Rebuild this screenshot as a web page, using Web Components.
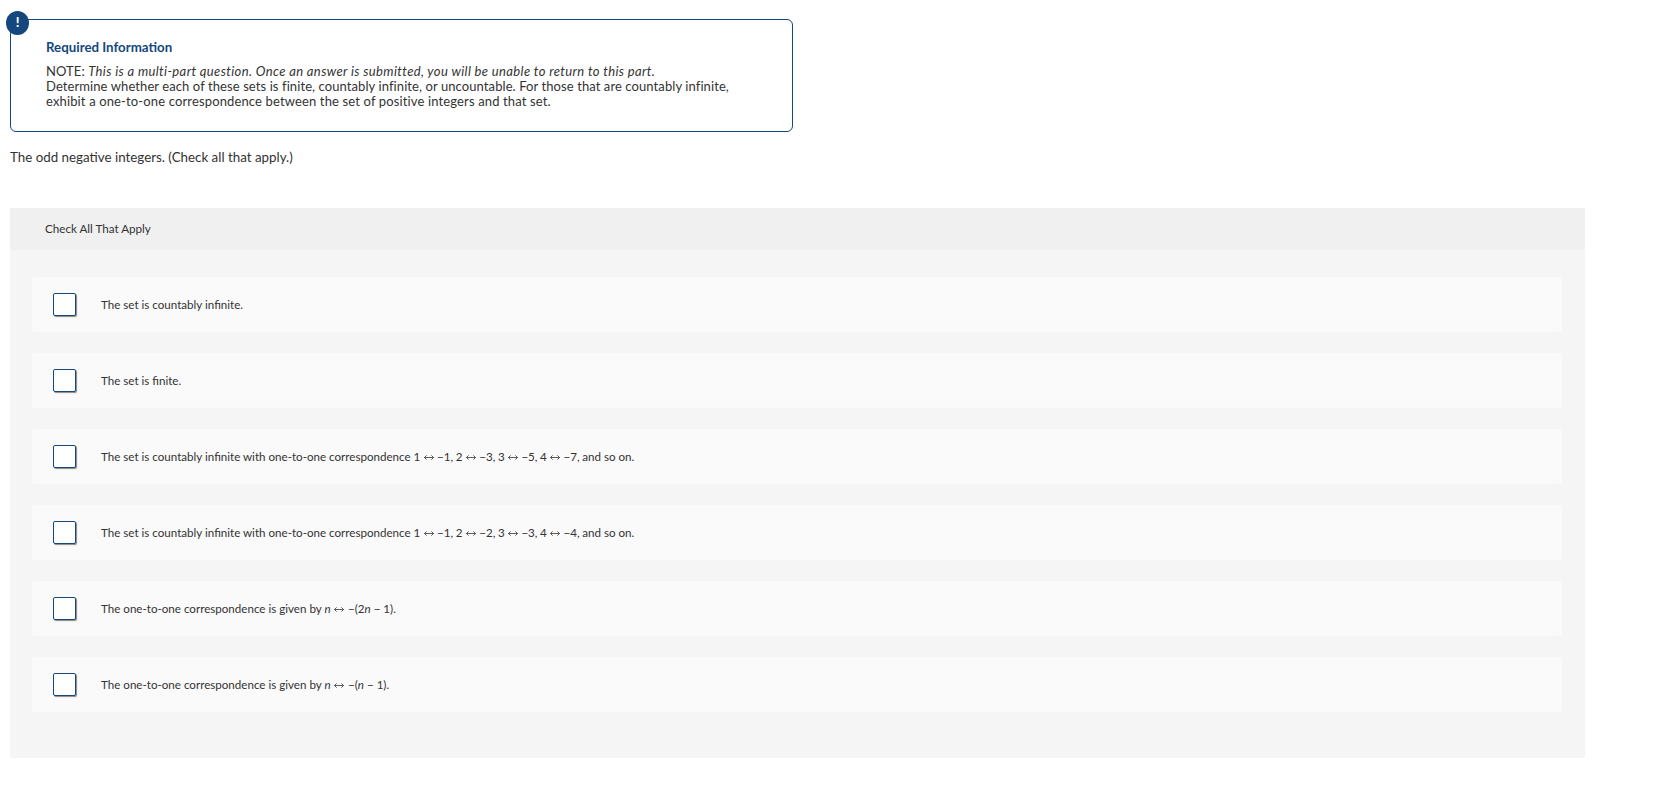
<!DOCTYPE html>
<html lang="en">
<head>
<meta charset="utf-8">
<title>Required Information</title>
<style>
    html, body { margin: 0; background: #fff; }
    body { font-family: Lato, "Liberation Sans", sans-serif; color: #333; }
</style>
</head>
<body>
<question-page>
    <required-info title-text="Required Information">
        NOTE: <i style="letter-spacing: 0.37px">This is a multi-part question. Once an answer is submitted, you will be unable to return to this part.</i><br>
        Determine whether each of these sets is finite, countably infinite, or uncountable. For those that are countably infinite,<br>
        <span style="letter-spacing: 0.14px">exhibit a one-to-one correspondence between the set of positive integers and that set.</span>
    </required-info>
    <question-prompt>The odd negative integers. (Check all that apply.)</question-prompt>
    <check-panel heading="Check All That Apply">
        <check-option>The set is countably infinite.</check-option>
        <check-option>The set is finite.</check-option>
        <check-option>The set is countably infinite with one-to-one correspondence <math-run>1 <math-arrow></math-arrow> −1, 2 <math-arrow></math-arrow> −3, 3 <math-arrow></math-arrow> −5, 4 <math-arrow></math-arrow> −7, </math-run>and so on.</check-option>
        <check-option>The set is countably infinite with one-to-one correspondence <math-run>1 <math-arrow></math-arrow> −1, 2 <math-arrow></math-arrow> −2, 3 <math-arrow></math-arrow> −3, 4 <math-arrow></math-arrow> −4, </math-run>and so on.</check-option>
        <check-option>The one-to-one correspondence is given by <i>n</i> <math-arrow></math-arrow> −(2<i>n</i> − 1).</check-option>
        <check-option>The one-to-one correspondence is given by <i>n</i> <math-arrow></math-arrow> −(<i>n</i> − 1).</check-option>
    </check-panel>
</question-page>
<script>
class QuestionPage extends HTMLElement {
    constructor() {
        super();
        this.attachShadow({ mode: 'open' });
        this.shadowRoot.innerHTML = `
            <style>
                :host {
                    display: flex;
                    flex-direction: column;
                    align-items: flex-start;
                    padding: 19px 72px 44px 10px;
                    height: 802px;
                    box-sizing: border-box;
                }
            </style>
            <slot></slot>
        `;
    }
}

class RequiredInfo extends HTMLElement {
    constructor() {
        super();
        this.attachShadow({ mode: 'open' });
    }

    connectedCallback() {
        this.shadowRoot.innerHTML = `
            <style>
                :host {
                    display: block;
                    position: relative;
                    box-sizing: border-box;
                    width: 783px;
                    height: 113px;
                    padding: 19px 35px 0 35px;
                    border: 1px solid #14477d;
                    border-radius: 6px;
                    background: #fff;
                }
                .badge {
                    position: absolute;
                    left: -5px;
                    top: -9px;
                    width: 23px;
                    height: 24px;
                    border-radius: 50%;
                    background: #14477d;
                    color: #fff;
                    font: 900 13px/22px Lato, sans-serif;
                    text-align: center;
                }
                .title {
                    font-size: 13.3px;
                    font-weight: 700;
                    line-height: 16px;
                    color: #14477d;
                    margin-bottom: 9px;
                }
                .body {
                    font-size: 13px;
                    letter-spacing: 0.09px;
                    line-height: 15px;
                    color: #333;
                }
            </style>
            <div class="badge">!</div>
            <div class="title">${this.getAttribute('title-text') || ''}</div>
            <div class="body"><slot></slot></div>
        `;
    }
}

class QuestionPrompt extends HTMLElement {
    constructor() {
        super();
        this.attachShadow({ mode: 'open' });
        this.shadowRoot.innerHTML = `
            <style>
                :host {
                    display: block;
                    margin-top: 16px;
                    font-size: 13.35px;
                    line-height: 18px;
                    color: #333;
                }
            </style>
            <slot></slot>
        `;
    }
}

class CheckPanel extends HTMLElement {
    constructor() {
        super();
        this.attachShadow({ mode: 'open' });
    }

    connectedCallback() {
        this.shadowRoot.innerHTML = `
            <style>
                :host {
                    display: block;
                    box-sizing: border-box;
                    width: 1575px;
                    height: 550px;
                    margin-top: 42px;
                    background: #f5f5f5;
                    border-radius: 2px;
                }
                .head {
                    box-sizing: border-box;
                    height: 42px;
                    padding: 0 35px 2px;
                    display: flex;
                    align-items: center;
                    background: #f0f0f0;
                    font-size: 11.65px;
                    color: #333;
                }
                .list {
                    display: flex;
                    flex-direction: column;
                    gap: 21px;
                    padding: 27px 23px 0 22px;
                }
            </style>
            <div class="head">${this.getAttribute('heading') || ''}</div>
            <div class="list"><slot></slot></div>
        `;
    }
}

class CheckOption extends HTMLElement {
    constructor() {
        super();
        this.attachShadow({ mode: 'open' });
        this.shadowRoot.innerHTML = `
            <style>
                :host {
                    display: flex;
                    align-items: center;
                    gap: 24px;
                    height: 55px;
                    padding-left: 21px;
                    background: #fafafa;
                    border-radius: 3px;
                    font-size: 11.6px;
                    color: #333;
                }
                .box {
                    flex: none;
                    box-sizing: border-box;
                    width: 23px;
                    height: 23px;
                    margin-right: 1px;
                    background: #fff;
                    border: 1px solid #14477d;
                    border-radius: 2px;
                    box-shadow: 1px 1px 1px #888;
                }
            </style>
            <span class="box"></span>
            <span class="label"><slot></slot></span>
        `;
    }
}

// spacing of the 1 <-> -1 runs, tighter than the words around them
class MathRun extends HTMLElement {
    constructor() {
        super();
        this.attachShadow({ mode: 'open' });
        this.shadowRoot.innerHTML = `
            <style>
                :host { display: inline; word-spacing: -0.35px; }
            </style>
            <slot></slot>
        `;
    }
}

class MathArrow extends HTMLElement {
    constructor() {
        super();
        this.attachShadow({ mode: 'open' });
        this.shadowRoot.innerHTML = `
            <style>
                :host { display: inline-block; width: 10px; height: 7px; margin: 0 0.75px; vertical-align: 0.5px; }
                svg { display: block; }
            </style>
            <svg width="10" height="7" viewBox="0 0 10 7" fill="none" stroke="#333" stroke-width="0.8">
                <path d="M0.5 3.5H9.5M2.6 1.4L0.5 3.5L2.6 5.6M7.4 1.4L9.5 3.5L7.4 5.6"/>
            </svg>
        `;
    }
}

customElements.define('question-page', QuestionPage);
customElements.define('required-info', RequiredInfo);
customElements.define('question-prompt', QuestionPrompt);
customElements.define('check-panel', CheckPanel);
customElements.define('check-option', CheckOption);
customElements.define('math-run', MathRun);
customElements.define('math-arrow', MathArrow);
</script>
</body>
</html>
